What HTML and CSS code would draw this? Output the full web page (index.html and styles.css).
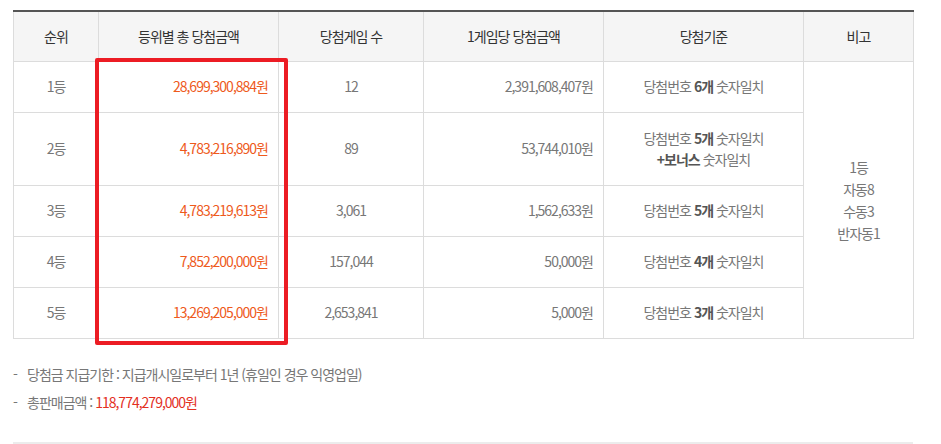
FILE: index.html
```html
<!DOCTYPE html>
<html lang="ko">
<head>
<meta charset="utf-8">
<link rel="stylesheet" href="styles.css">
</head>
<body>
<div class="wrap">
  <div class="table-box">
    <table class="tbl">
      <colgroup>
        <col class="c1"><col class="c2"><col class="c3"><col class="c4"><col class="c5"><col class="c6">
      </colgroup>
      <thead>
        <tr>
          <th>순위</th>
          <th>등위별 총 당첨금액</th>
          <th>당첨게임 수</th>
          <th>1게임당 당첨금액</th>
          <th>당첨기준</th>
          <th>비고</th>
        </tr>
      </thead>
      <tbody>
        <tr>
          <td>1등</td>
          <td class="amt">28,699,300,884원</td>
          <td>12</td>
          <td class="num">2,391,608,407원</td>
          <td>당첨번호 <b>6개</b> 숫자일치</td>
          <td rowspan="5" class="note">1등<br>자동8<br>수동3<br>반자동1</td>
        </tr>
        <tr class="tall">
          <td>2등</td>
          <td class="amt">4,783,216,890원</td>
          <td>89</td>
          <td class="num">53,744,010원</td>
          <td>당첨번호 <b>5개</b> 숫자일치<br><b>+보너스</b> 숫자일치</td>
        </tr>
        <tr>
          <td>3등</td>
          <td class="amt">4,783,219,613원</td>
          <td>3,061</td>
          <td class="num">1,562,633원</td>
          <td>당첨번호 <b>5개</b> 숫자일치</td>
        </tr>
        <tr>
          <td>4등</td>
          <td class="amt">7,852,200,000원</td>
          <td>157,044</td>
          <td class="num">50,000원</td>
          <td>당첨번호 <b>4개</b> 숫자일치</td>
        </tr>
        <tr>
          <td>5등</td>
          <td class="amt">13,269,205,000원</td>
          <td>2,653,841</td>
          <td class="num">5,000원</td>
          <td>당첨번호 <b>3개</b> 숫자일치</td>
        </tr>
      </tbody>
    </table>
    <div class="highlight"></div>
  </div>
  <ul class="notes">
    <li>당첨금 지급기한 : 지급개시일로부터 1년 (휴일인 경우 익영업일)</li>
    <li>총판매금액 : <span class="total">118,774,279,000원</span></li>
  </ul>
  <div class="rule"></div>
</div>
</body>
</html>
```

FILE: styles.css
```css
* { box-sizing: border-box; }
html, body {
  margin: 0;
  padding: 0;
  background: #ffffff;
}
body {
  font-family: "Noto Sans CJK KR", "Noto Sans", sans-serif;
  font-size: 14px;
  color: #777;
  letter-spacing: -1px;
}
.wrap {
  width: 900px;
  margin-left: 13px;
  padding-top: 10px;
}
.table-box {
  position: relative;
}
.tbl {
  width: 900px;
  border-collapse: collapse;
  table-layout: fixed;
  border-top: 2px solid #555;
}
.c1 { width: 85px; }
.c2 { width: 180px; }
.c3 { width: 145px; }
.c4 { width: 180px; }
.c5 { width: 200px; }
.c6 { width: 110px; }
.tbl th {
  height: 50px;
  background: #f5f5f5;
  color: #333;
  font-weight: normal;
  border: 1px solid #dcdcdc;
  border-top: none;
  text-align: center;
  padding: 0;
}
.tbl td {
  height: 51px;
  border: 1px solid #dcdcdc;
  text-align: center;
  padding: 0 10px;
  line-height: 21px;
}
.tbl tr.tall td { height: 73px; }
.tbl td b { font-weight: bold; color: #555; }
.tbl td.amt { text-align: right; color: #ee5a1c; }
.tbl td.num { text-align: right; }
.tbl td.note { line-height: 22px; }
.highlight {
  position: absolute;
  left: 82px;
  top: 48px;
  width: 193px;
  height: 287px;
  border: 4px solid #ec1c24;
  border-radius: 2px;
}
.notes {
  list-style: none;
  margin: 21px 0 0;
  padding: 0;
}
.notes li {
  position: relative;
  padding-left: 14px;
  line-height: 28px;
  color: #777;
}
.notes li::before {
  content: "-";
  position: absolute;
  left: 0;
  top: 0;
}
.total { color: #e3301f; }
.rule {
  margin-top: 26px;
  height: 2px;
  background: #ececec;
}
```
